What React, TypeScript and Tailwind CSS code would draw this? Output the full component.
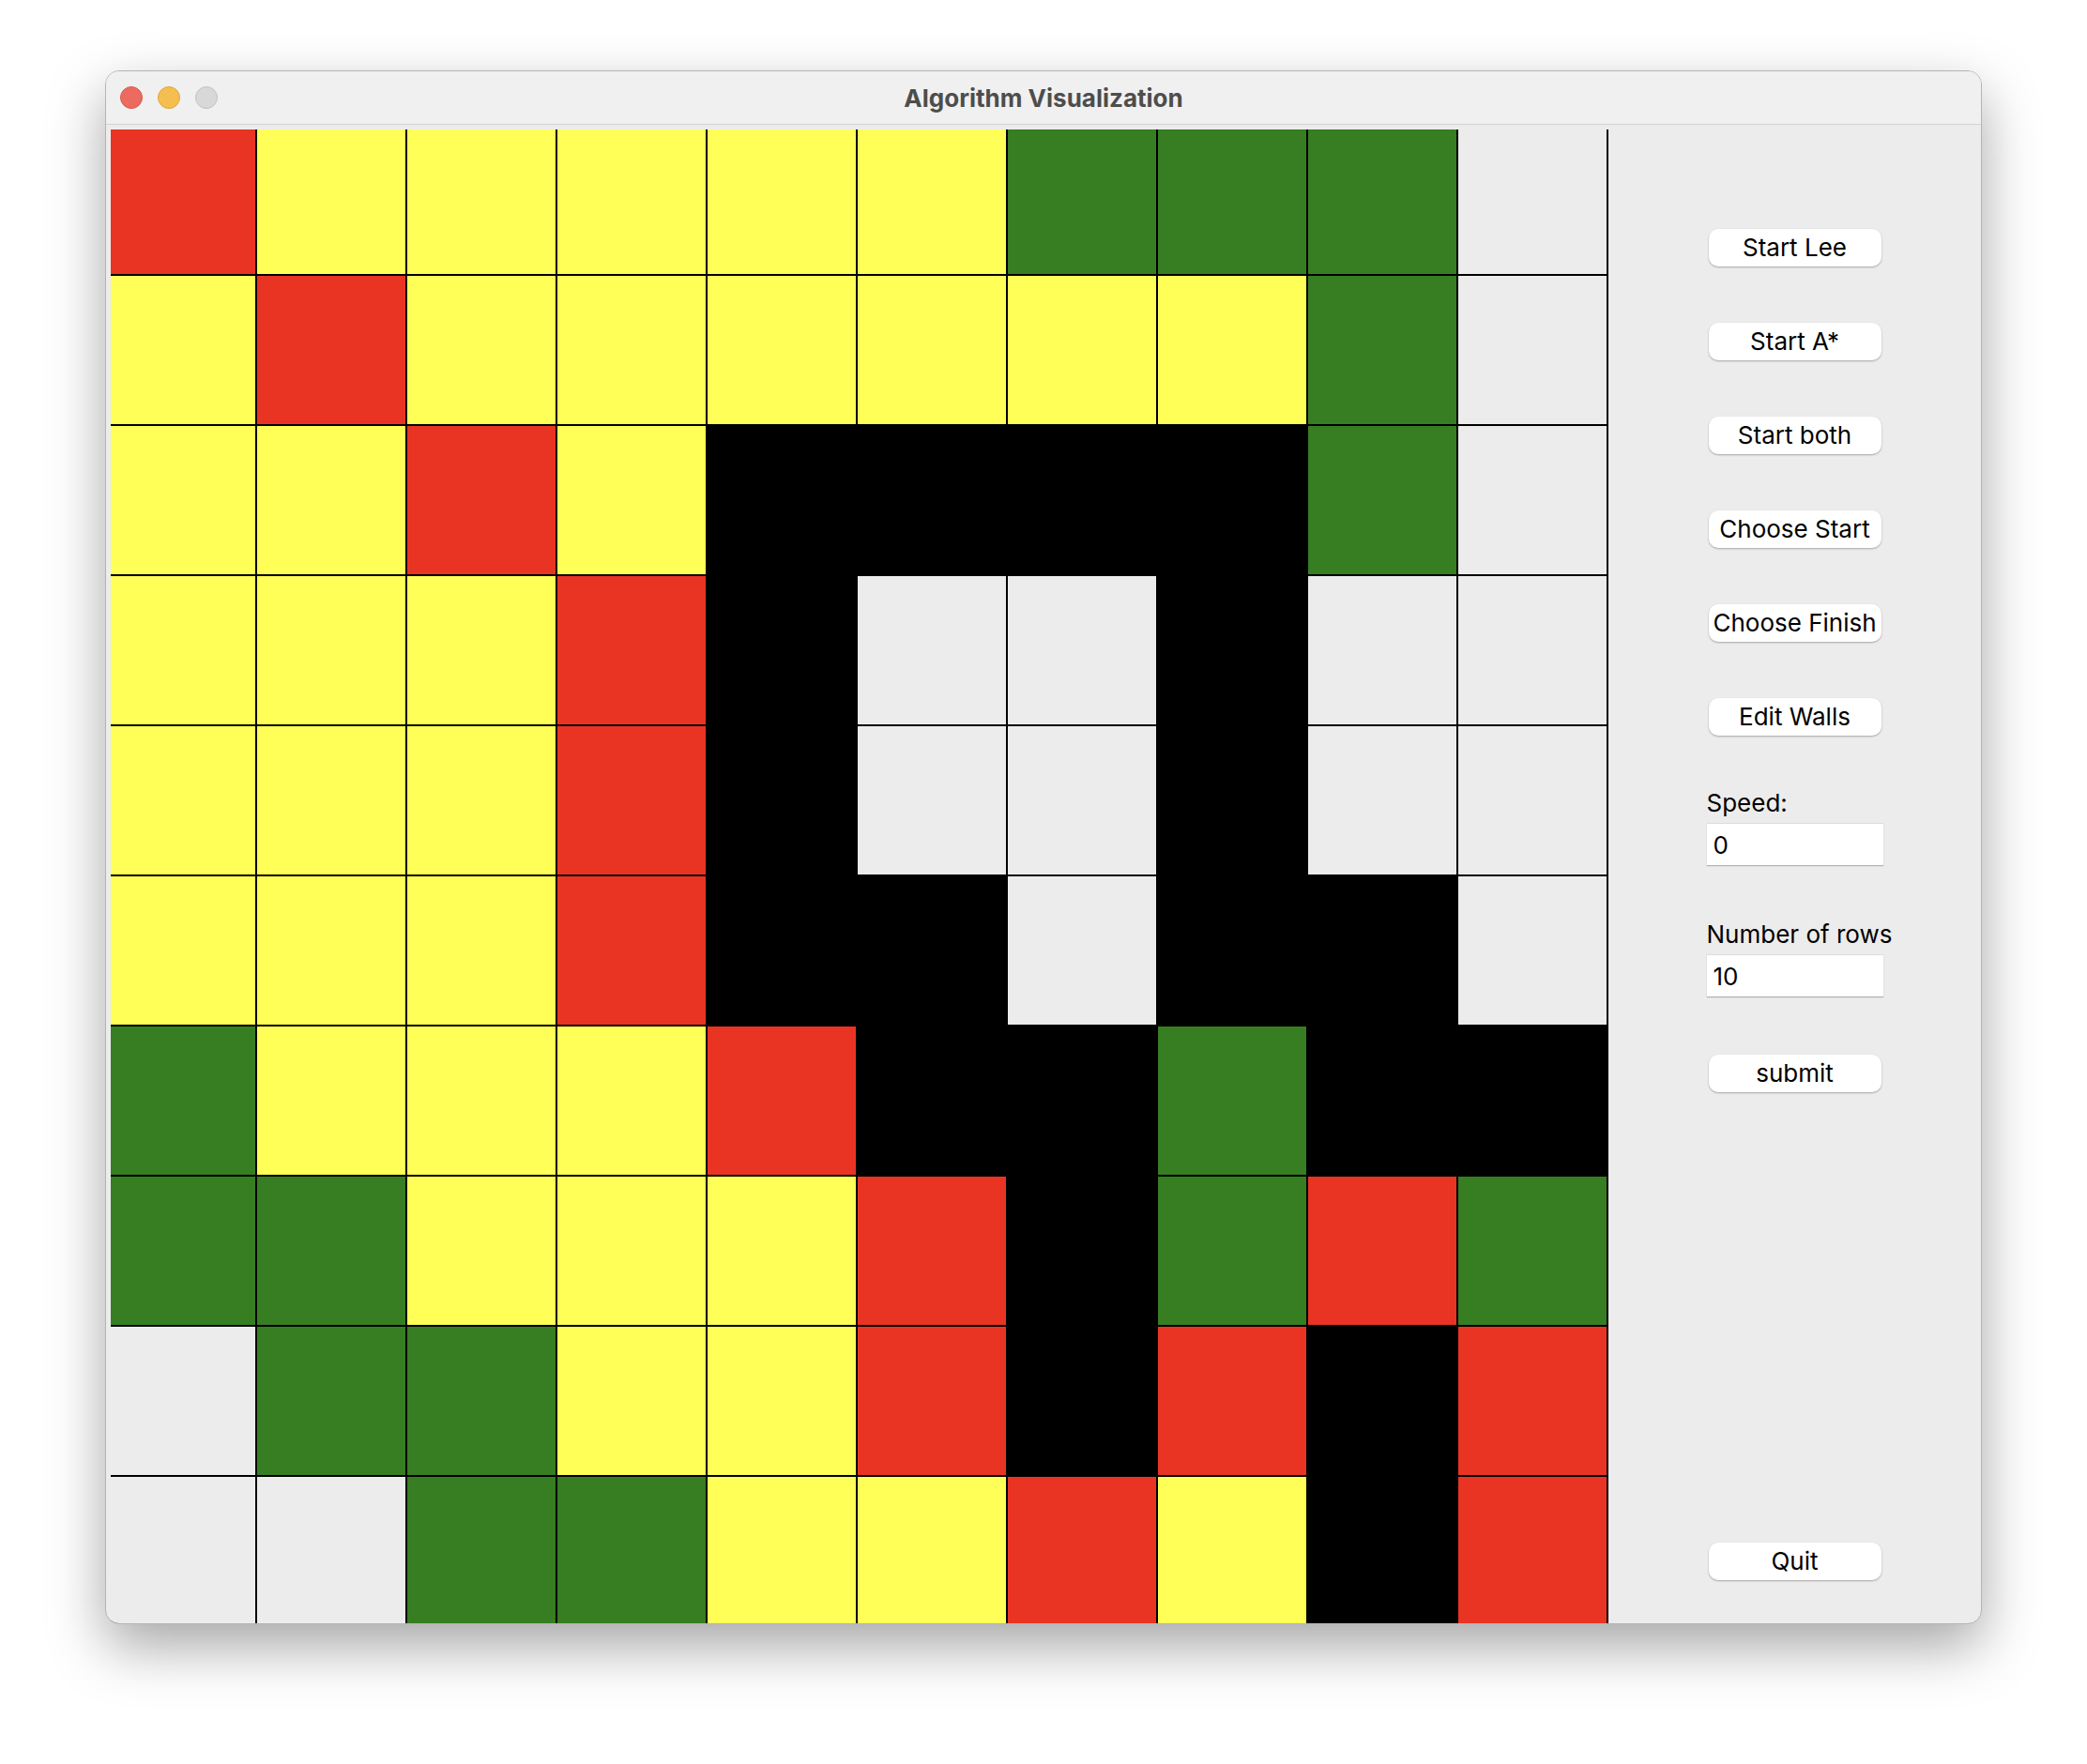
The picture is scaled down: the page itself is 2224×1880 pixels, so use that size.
const CELLS = [
  "RYYYYYGGGL",
  "YRYYYYYYGL",
  "YYRYBBBBGL",
  "YYYRBLLBLL",
  "YYYRBLLBLL",
  "YYYRBBLBBL",
  "GYYYRBBGBB",
  "GGYYYRBGRG",
  "LGGYYRBRBR",
  "LLGGYYRYBR",
];

const cellColor: Record<string, string> = {
  R: "bg-[#e93424]",
  Y: "bg-[#ffff57]",
  G: "bg-[#377d22]",
  B: "bg-black",
  L: "bg-[#ececec]",
};

const MacButton = ({ label }: { label: string }) => (
  <button className="w-[184px] h-[40px] mx-auto rounded-[10px] bg-white text-[26px] leading-none text-black shadow-[0_1px_2px_rgba(0,0,0,0.3)] flex items-center justify-center">
    {label}
  </button>
);

const Field = ({ label, value }: { label: string; value: string }) => (
  <div className="flex flex-col gap-[5px]">
    <span className="text-[26px] leading-[32px] text-black whitespace-nowrap">{label}</span>
    <div className="h-[45px] w-[188px] bg-white border-t border-[#dcdcdc] shadow-[0_1px_1px_rgba(0,0,0,0.25)] px-[7px] flex items-center text-[26px] text-black">
      {value}
    </div>
  </div>
);

const App = () => {
  return (
    <div
      className="w-[2224px] h-[1880px] bg-white pl-[112px] pt-[75px]"
      style={{ fontFamily: "Inter, 'Liberation Sans', sans-serif" }}
    >
      <div className="w-[2000px] h-[1656px] rounded-[15px] border border-[#b4b4b4] bg-[#ececec] overflow-hidden flex flex-col shadow-[0_24px_60px_rgba(0,0,0,0.35)]">
        {/* title bar */}
        <div className="h-[57px] shrink-0 bg-[#f0f0f0] border-b border-[#d3d3d3] grid grid-cols-[1fr_auto_1fr] items-center">
          <div className="flex items-center gap-[16px] pl-[15px]">
            <span className="w-[24px] h-[24px] rounded-full bg-[#ed6a5e] border border-[#d85a4f]" />
            <span className="w-[24px] h-[24px] rounded-full bg-[#f5bf4f] border border-[#dca640]" />
            <span className="w-[24px] h-[24px] rounded-full bg-[#d8d8d8] border border-[#c2c2c2]" />
          </div>
          <span className="text-[26px] font-bold text-[#4d4d4d]">Algorithm Visualization</span>
          <div />
        </div>

        {/* content */}
        <div className="flex flex-1 overflow-hidden">
          <div className="pl-[5px] pt-[5px] shrink-0">
            <div className="grid grid-cols-[154px_repeat(9,158px)] grid-rows-[154px_repeat(8,158px)_157px] gap-[2px] pr-[2px] bg-black">
              {CELLS.flatMap((row, r) =>
                row.split("").map((c, i) => (
                  <div key={`${r}-${i}`} className={cellColor[c]} />
                ))
              )}
            </div>
          </div>

          <div className="flex-1 flex justify-center pt-[111px] pb-[46px]">
            <div className="w-[188px] flex flex-col">
              <div className="flex flex-col gap-[60px]">
                <MacButton label="Start Lee" />
                <MacButton label="Start A*" />
                <MacButton label="Start both" />
                <MacButton label="Choose Start" />
                <MacButton label="Choose Finish" />
                <MacButton label="Edit Walls" />
              </div>
              <div className="mt-[56px]">
                <Field label="Speed:" value="0" />
              </div>
              <div className="mt-[58px]">
                <Field label="Number of rows" value="10" />
              </div>
              <div className="mt-[62px]">
                <MacButton label="submit" />
              </div>
              <div className="mt-auto">
                <MacButton label="Quit" />
              </div>
            </div>
          </div>
        </div>
      </div>
    </div>
  );
};

export default App;
